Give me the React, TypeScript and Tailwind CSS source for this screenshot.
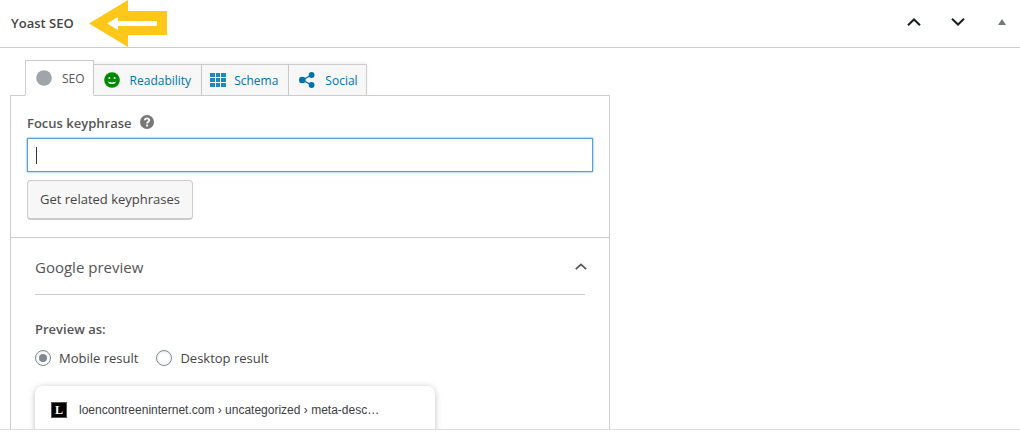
import { useState } from "react";

type Tab = "SEO" | "Readability" | "Schema" | "Social";
type PreviewMode = "mobile" | "desktop";

const PREVIEW_MODES: { value: PreviewMode; label: string }[] = [
  { value: "mobile", label: "Mobile result" },
  { value: "desktop", label: "Desktop result" },
];

function Chevron({ up, className }: { up?: boolean; className: string }) {
  return (
    <svg viewBox="0 0 14 8" fill="none" stroke="currentColor" strokeWidth="2" className={className} aria-hidden="true">
      <path d={up ? "M1 7.2 7 1.5 13 7.2" : "M1 .8 7 6.5 13 .8"} />
    </svg>
  );
}

function ArrowLeft() {
  return (
    <svg width="78" height="47" viewBox="0 0 78 47" aria-hidden="true">
      <path d="M0 23.5 39 0v11h39v24H39v12z" fill="#ffc719" />
      <path d="M18 23.5 29 17v4h39v5H29v4z" fill="#fff" />
    </svg>
  );
}

function TabIcon({ name }: { name: Tab }) {
  return (
    <svg width="16" height="16" viewBox="0 0 16 16" className="shrink-0" aria-hidden="true">
      {name === "SEO" && <circle cx="8" cy="8" r="7.8" fill="#a0a5aa" />}
      {name === "Readability" && (
        <>
          <circle cx="8" cy="8" r="7.8" fill="#008a00" />
          <circle cx="5.4" cy="6" r="1" fill="#fff" />
          <circle cx="10.6" cy="6" r="1" fill="#fff" />
          <path d="M3.8 9.2c1 3.8 7.4 3.8 8.400 0-2 1.6-6.4 1.6-8.4 0z" fill="#fff" />
        </>
      )}
      {name === "Schema" && (
        <path
          d="M0 1h5v4H0zM6 1h4v4H6zM11 1h5v4h-5zM0 6h5v4H0zM6 6h4v4H6zM11 6h5v4h-5zM0 11h5v4H0zM6 11h4v4H6zM11 11h5v4h-5z"
          fill="#1c88c0"
        />
      )}
      {name === "Social" && (
        <g fill="#0073aa">
          <path d="M12.5 3 3.5 8l9 5" fill="none" stroke="#0073aa" strokeWidth="1.4" />
          <circle cx="12.6" cy="3" r="2.9" />
          <circle cx="3.3" cy="8" r="3.3" />
          <circle cx="12.6" cy="13" r="2.9" />
        </g>
      )}
    </svg>
  );
}

export default function App() {
  const [tab, setTab] = useState<Tab>("SEO");
  const [mode, setMode] = useState<PreviewMode>("mobile");
  const [keyphrase, setKeyphrase] = useState<string>("");
  const [open, setOpen] = useState<boolean>(true);

  const getTab = function (name: Tab, spacing: string): React.ReactNode {
    const look =
      tab === name
        ? "h-9 border-l border-b-white bg-white text-[#555]"
        : "h-8 border-b-[#ccc] bg-[#f7f7f7] text-[#0073aa] shadow-[0_-2px_3px_rgba(0,0,0,0.06)]";
    return (
      <button
        type="button"
        role="tab"
        aria-selected={tab === name}
        onClick={() => setTab(name)}
        className={`flex items-center border-t border-r border-b border-t-[#ccc] border-r-[#ccc] border-l-[#ccc] text-[12px] ${look} ${spacing}`}>
        <TabIcon name={name} />
        <span className="pt-0.5">{name}</span>
      </button>
    );
  };

  return (
    <div className="flex h-screen flex-col bg-white pb-2 font-['Open_Sans','Noto_Sans',sans-serif] text-[#444]">
      <section className="flex min-h-0 flex-1 flex-col overflow-hidden border-b border-[#ddd]">
        <header className="flex h-12 shrink-0 items-start border-b border-[#ccc] pr-[14px] pl-[11px]">
          <h2 className="mr-[15px] text-[13px] leading-[46px] font-semibold">Yoast SEO</h2>
          <ArrowLeft />
          <div className="ml-auto flex h-11 items-center">
            <button type="button" aria-label="Move up" className="mr-[30px] text-[#191e23]">
              <Chevron up className="h-2 w-3.5" />
            </button>
            <button type="button" aria-label="Move down" className="mr-[33px] text-[#191e23]">
              <Chevron className="h-2 w-3.5" />
            </button>
            <button type="button" aria-label="Toggle panel" className="text-[#72777c]">
              <svg width="8" height="6" viewBox="0 0 8 6" fill="currentColor" aria-hidden="true">
                <path d="M4 0 8 6H0z" />
              </svg>
            </button>
          </div>
        </header>

        <div className="px-[10px] pt-3">
          <div className="max-w-[600px]">
            <div role="tablist" className="relative -mb-px flex items-end pl-[15px]">
              {getTab("SEO", "gap-[10px] pr-2 pl-[10px]")}
              {getTab("Readability", "gap-[10px] px-[10px]")}
              {getTab("Schema", "gap-2 pr-[10px] pl-2")}
              {getTab("Social", "gap-[10px] pr-2 pl-[10px]")}
            </div>

            <div className="border border-[#ccc]">
              <div className="border-b border-[#ccc] px-4 pt-4 pb-[17px]">
                <div className="mb-[6px] flex h-5 items-center gap-2">
                  <label htmlFor="keyphrase" className="pt-[3px] text-[13px] font-semibold text-[#555]">
                    Focus keyphrase
                  </label>
                  <button type="button" aria-label="Help">
                    <svg width="14" height="14" viewBox="0 0 14 14" aria-hidden="true">
                      <circle cx="7" cy="7" r="7" fill="#777" />
                      <path
                        d="M4.8 5.3c.2-2.600 4.600-2.400 4.500 0C9.200 6.700 7.100 6.700 7.100 8.500"
                        fill="none"
                        stroke="#fff"
                        strokeWidth="1.8"
                      />
                      <path d="M6.2 9.6h1.800v1.800H6.200z" fill="#fff" />
                    </svg>
                  </button>
                </div>
                <div className="relative">
                  <input
                    type="text"
                    id="keyphrase"
                    value={keyphrase}
                    onChange={(event) => setKeyphrase(event.target.value)}
                    className="block h-[34px] w-full border border-[#5b9dd9] px-2 text-[14px] caret-transparent shadow-[0_0_2px_rgba(30,140,190,0.8)] outline-none"
                  />
                  {keyphrase === "" && <span className="absolute top-[9px] left-[9px] h-[17px] w-px bg-[#32373c]" />}
                </div>
                <button
                  type="button"
                  className="mt-2 block h-10 rounded-[4px] border border-b-2 border-[#ccc] bg-[#f7f7f7] px-3 text-[13px]">
                  Get related keyphrases
                </button>
              </div>

              <div className="px-6">
                <button
                  type="button"
                  aria-expanded={open}
                  onClick={() => setOpen(!open)}
                  className="flex h-[57px] w-full items-center justify-between border-b border-[#ccc] text-[15px] text-[#555]">
                  <span className="pt-0.5">Google preview</span>
                  <Chevron up={open} className="-mr-0.5 h-[7px] w-3" />
                </button>
                {open && (
                  <div className="pt-6">
                    <fieldset>
                      <legend className="text-[13px] leading-5 font-semibold text-[#555]">Preview as:</legend>
                      <div className="mt-[9px] flex gap-[18px]">
                        {PREVIEW_MODES.map(({ value, label }) => (
                          <label key={value} className="flex items-center gap-2 text-[13px] leading-5">
                            <input
                              type="radio"
                              name="preview-mode"
                              checked={mode === value}
                              onChange={() => setMode(value)}
                              className="flex size-4 appearance-none items-center justify-center rounded-full border border-[#7e8993] bg-white shadow-[inset_0_1px_2px_rgba(0,0,0,0.1)] checked:before:size-2 checked:before:rounded-full checked:before:bg-[#7e8993] checked:before:content-['']"
                            />
                            {label}
                          </label>
                        ))}
                      </div>
                    </fieldset>
                    <div className="mt-[18px] h-40 max-w-[400px] rounded-lg bg-white px-4 pt-4 shadow-[0_1px_6px_rgba(32,33,36,0.28)]">
                      <div className="flex items-center gap-3 font-['Liberation_Sans',Arial,sans-serif] text-[12px] leading-4 text-[#3c4043]">
                        <span className="flex size-4 items-center justify-center border border-[#555] bg-black font-['Liberation_Serif',serif] text-[12px] font-bold text-white">
                          L
                        </span>
                        <span>loencontreeninternet.com › uncategorized › meta-desc…</span>
                      </div>
                    </div>
                  </div>
                )}
              </div>
            </div>
          </div>
        </div>
      </section>
    </div>
  );
}
